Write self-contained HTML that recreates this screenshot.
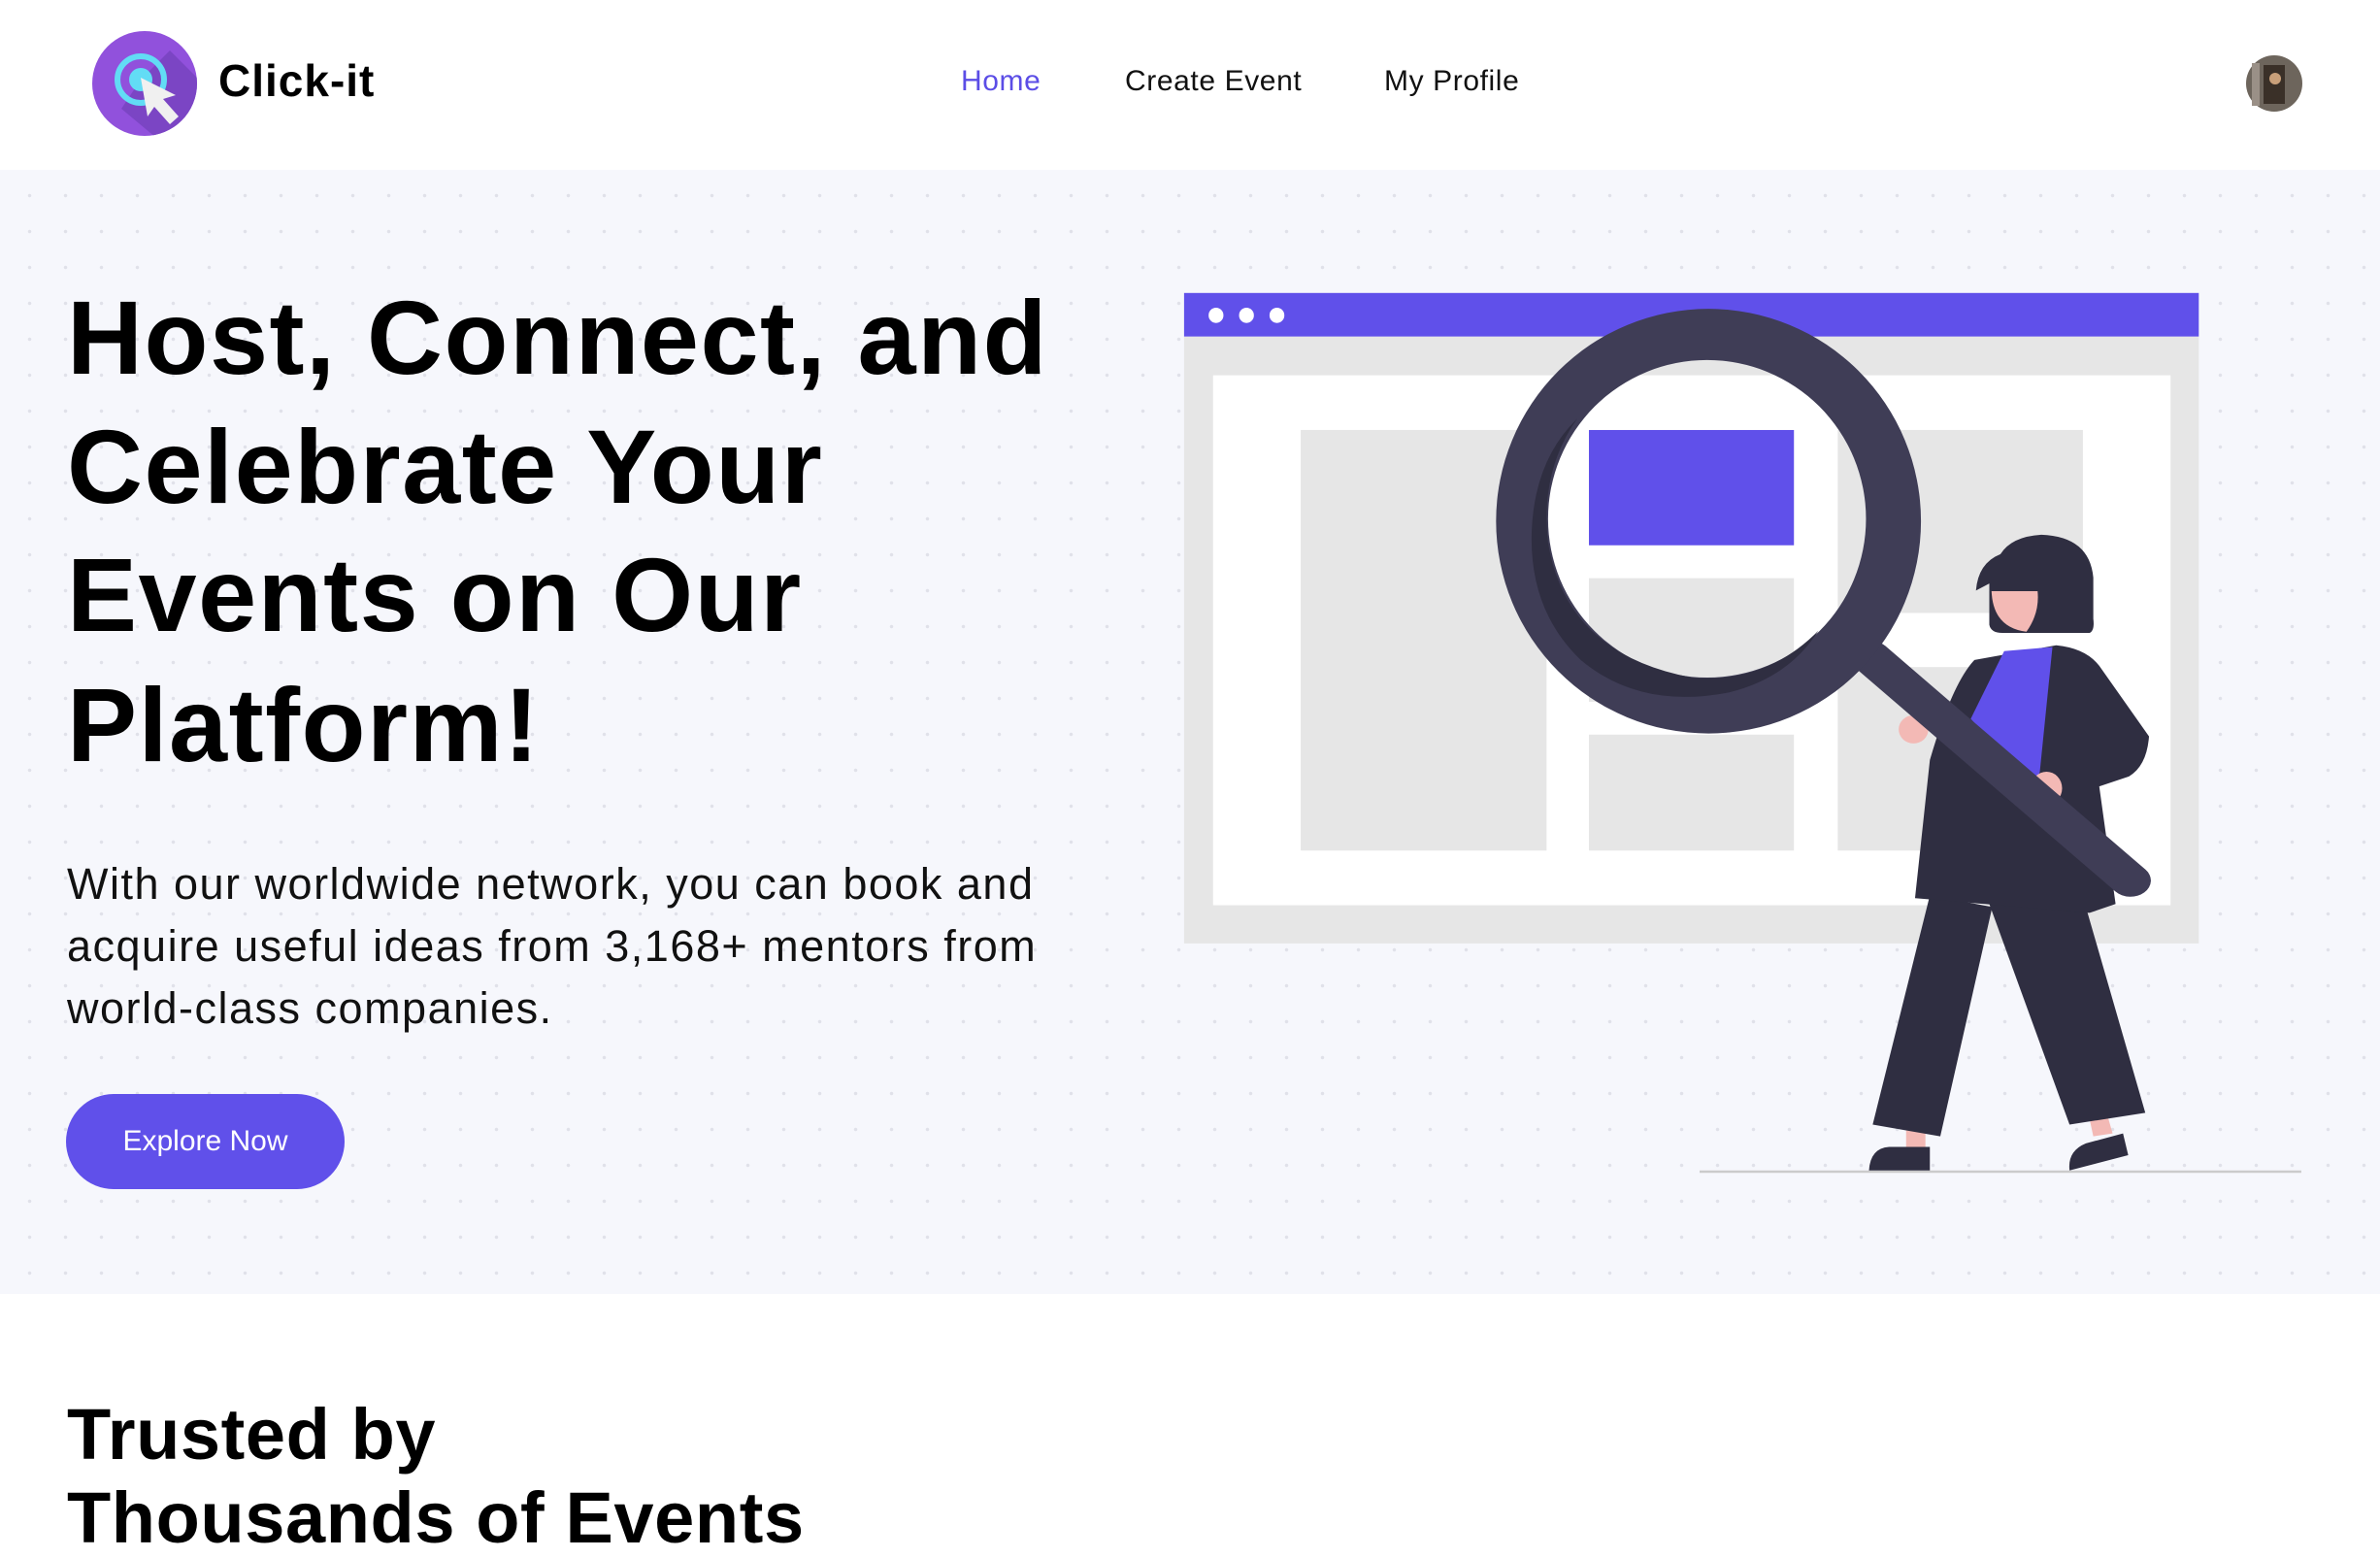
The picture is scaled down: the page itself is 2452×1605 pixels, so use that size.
<!DOCTYPE html>
<html><head><meta charset="utf-8"><style>
*{margin:0;padding:0;box-sizing:border-box}
html,body{width:2452px;height:1594px;overflow:hidden;background:#fff;font-family:"Liberation Sans",sans-serif;color:#000}
.nav{position:absolute;left:0;top:0;width:2452px;height:175px;background:#fff}
.hero{position:absolute;left:0;top:175px;width:2452px;height:1158px;background-color:#f6f7fc;
background-image:radial-gradient(circle,#e0e1e9 1.5px,transparent 2px);background-size:37px 37px;background-position:12px 8px}
.logo{position:absolute;left:95px;top:32px}
.brand{position:absolute;left:225px;top:56px;font-size:46px;font-weight:bold;letter-spacing:1px}
.nl{position:absolute;top:67px;font-size:30px;color:#111;letter-spacing:0.6px}
.h1{position:absolute;left:69px;font-size:108px;font-weight:bold;letter-spacing:1.5px;white-space:nowrap;line-height:1}
.p{position:absolute;left:69px;font-size:45px;letter-spacing:1.5px;white-space:nowrap;line-height:1;color:#111}
.btn{position:absolute;left:68px;top:1127px;width:287px;height:98px;border-radius:49px;background:#6050ea;color:#fff;font-size:30px;display:flex;align-items:center;justify-content:center}
.h2{position:absolute;left:69px;font-size:74px;font-weight:bold;white-space:nowrap;line-height:1;letter-spacing:0.6px}
</style></head><body>
<div class="nav">
<svg class="logo" width="108" height="108" viewBox="0 0 108 108">
<defs><clipPath id="c"><circle cx="54" cy="54" r="54"/></clipPath></defs>
<circle cx="54" cy="54" r="54" fill="#9151dc"/>
<polygon clip-path="url(#c)" points="50,50 80,20 140,80 90,130 30,80" fill="#7b45c4"/>
<circle cx="50" cy="50" r="24" fill="none" stroke="#62dcf5" stroke-width="6"/>
<circle cx="50" cy="50" r="12" fill="#62dcf5"/>
<polygon points="50,48 57,88 64,78 80,96 89,88 73,70 86,66" fill="#f0f0f0"/>
</svg>
<div class="brand">Click-it</div>
<div class="nl" style="left:990px;color:#5b4de6">Home</div>
<div class="nl" style="left:1159px">Create Event</div>
<div class="nl" style="left:1426px">My Profile</div>
<svg style="position:absolute;left:2314px;top:57px" width="58" height="58" viewBox="0 0 58 58"><circle cx="29" cy="29" r="29" fill="#6d655c"/><rect x="18" y="10" width="22" height="40" fill="#3a3028"/><circle cx="30" cy="24" r="6" fill="#c9a07a"/><rect x="6" y="8" width="8" height="44" fill="#9a9087"/></svg>
</div>
<div class="hero"></div>
<div class="h1" style="top:294px">Host, Connect, and</div>
<div class="h1" style="top:427px">Celebrate Your</div>
<div class="h1" style="top:559px">Events on Our</div>
<div class="h1" style="top:693px">Platform!</div>
<div class="p" style="top:888px">With our worldwide network, you can book and</div>
<div class="p" style="top:952px">acquire useful ideas from 3,168+ mentors from</div>
<div class="p" style="top:1016px">world-class companies.</div>
<div class="btn">Explore Now</div>
<svg style="position:absolute;left:1200px;top:280px" width="1200" height="950" viewBox="0 0 1568 1568" preserveAspectRatio="none">
<rect x="26" y="110" width="1366" height="1032" fill="#e6e6e6"/>
<rect x="26" y="36" width="1366" height="74" fill="#6050ea"/>
<ellipse cx="69" cy="74" rx="10" ry="13" fill="#fff"/><ellipse cx="110" cy="74" rx="10" ry="13" fill="#fff"/><ellipse cx="151" cy="74" rx="10" ry="13" fill="#fff"/>
<rect x="65" y="176" width="1289" height="901" fill="#fff"/>
<rect x="183" y="269" width="331" height="715" fill="#e6e6e6"/>
<rect x="571" y="521" width="276" height="210" fill="#e6e6e6"/>
<rect x="571" y="787" width="276" height="197" fill="#e6e6e6"/>
<rect x="906" y="269" width="330" height="311" fill="#e6e6e6"/>
<rect x="906" y="672" width="330" height="312" fill="#e6e6e6"/>
<rect x="571" y="269" width="276" height="196" fill="#6050ea"/>
<line x1="720" y1="1530" x2="1530" y2="1530" stroke="#cbcbcb" stroke-width="4"/>
<polygon points="998,1488 1024,1488 1024,1460 998,1460" fill="#f3b9b5"/>
<polygon points="1250,1470 1276,1465 1268,1430 1244,1435" fill="#f3b9b5"/>
<polygon points="1030,1060 1114,1080 1044,1470 953,1450" fill="#2f2e41"/>
<polygon points="1110,1075 1240,1080 1320,1430 1218,1450" fill="#2f2e41"/>
<path d="M948,1528 Q950,1490 975,1488 L1030,1488 L1030,1528 Z" fill="#2f2e41"/>
<path d="M1218,1528 Q1215,1495 1240,1482 L1290,1465 L1297,1502 Z" fill="#2f2e41"/>
<path d="M1090,660 L1200,635 Q1240,640 1258,670 L1325,790 Q1322,840 1298,858 L1258,875 L1280,1075 L1245,1090 L1010,1065 L1030,830 Q1060,700 1090,660 Z" fill="#2f2e41"/>
<polygon points="1130,645 1195,638 1178,850 1170,880 1085,760" fill="#6050ea"/>
<ellipse cx="1008" cy="778" rx="20" ry="24" fill="#f3b9b5"/>
<ellipse cx="1187" cy="878" rx="21" ry="28" fill="#f3b9b5"/>
<path d="M1110,530 L1110,600 Q1112,615 1130,614 L1245,614 Q1252,610 1250,590 L1250,520 Q1245,450 1180,447 Q1140,450 1125,480 Q1095,495 1092,542 Z" fill="#2f2e41"/>
<path d="M1113,543 L1175,543 Q1178,580 1160,612 Q1115,605 1113,543 Z" fill="#f3b9b5"/>
<line x1="950" y1="655" x2="1300" y2="1035" stroke="#3f3d56" stroke-width="55" stroke-linecap="round"/>
<path fill-rule="evenodd" fill="#3f3d56" d="M446,424 a286,361 0 1,0 572,0 a286,361 0 1,0 -572,0 Z M516,420 a214,270 0 1,0 428,0 a214,270 0 1,0 -428,0 Z"/>
<path d="M555,250 Q505,340 516,460 Q540,650 710,690 Q810,700 880,610 Q840,690 760,715 Q640,745 560,660 Q490,575 494,440 Q498,320 555,250 Z" fill="#2f2e41"/>
</svg>
<div class="h2" style="top:1441px">Trusted by</div>
<div class="h2" style="top:1527px">Thousands of Events</div>
</body></html>
